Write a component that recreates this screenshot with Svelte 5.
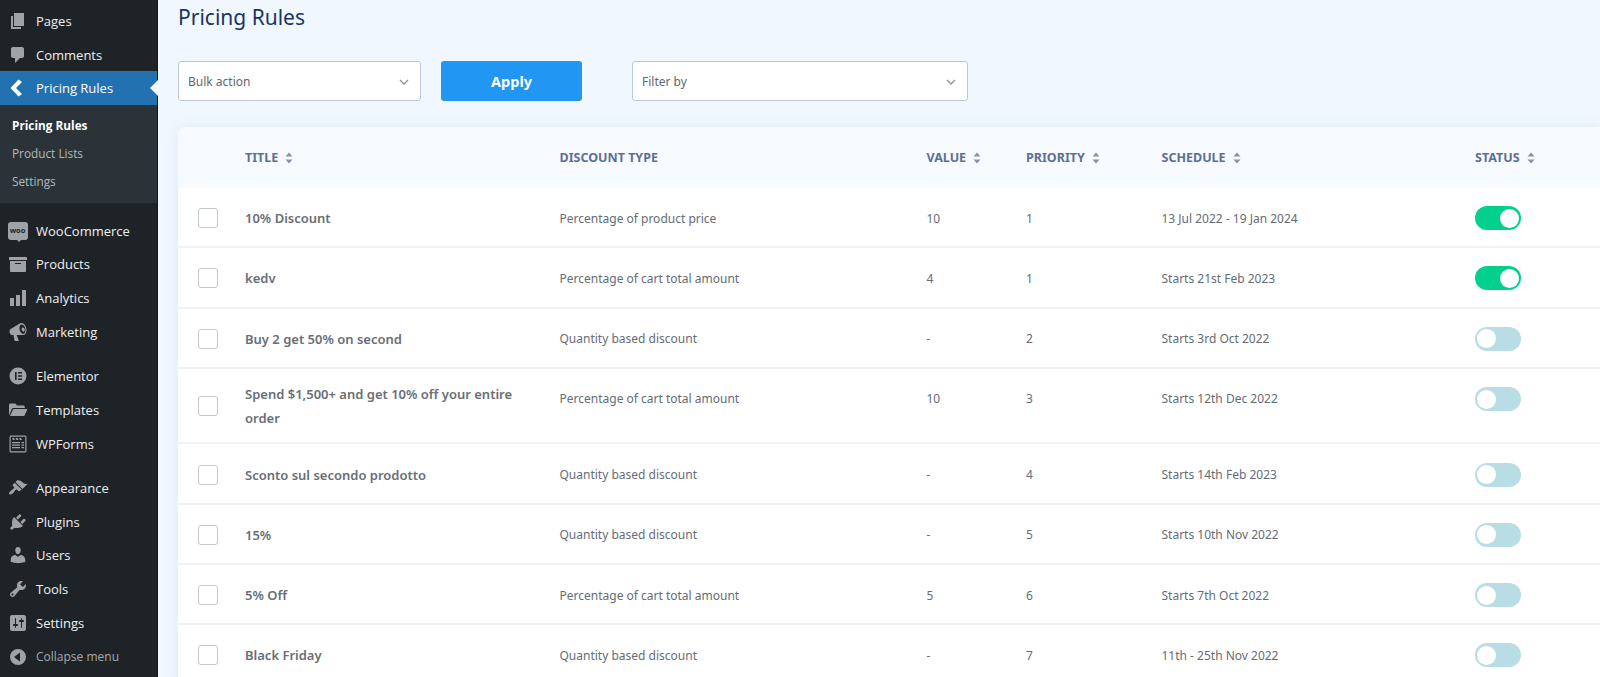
<script lang="ts">
  const icons: Record<string, string> = {
    pages: 'M6 15V2h10v13H6zm-1 1h8v2H3V5h2v11z',
    comments: 'M5 2h9c1.1 0 2 .9 2 2v7c0 1.1-.9 2-2 2h-2l-5 5v-5H5c-1.1 0-2-.9-2-2V4c0-1.1.9-2 2-2z',
    back: 'M10.500 1.500 14 4 8 10 14 16 10.500 18.500 2.500 10z',
    products: 'M19 4v2H1V4c0-.55.45-1 1-1h16c.55 0 1 .45 1 1zM2 7h16v10c0 .55-.45 1-1 1H3c-.55 0-1-.45-1-1V7zm11 3V9H7v1h6z',
    analytics: 'M18 18V2h-4v16h4zm-6 0V7H8v11h4zm-6 0v-8H2v8h4z',
    marketing: 'M18.15 5.94c.46 1.62.38 3.22-.02 4.48-.42 1.28-1.26 2.18-2.3 2.48-.3.1-.5.1-.8.1H8.6l2.2 5.5c0 .3-.2.5-.5.5H7c-.3 0-.5-.2-.5-.5l-1-5.5H4.25c-.5.06-1.08-.18-1.54-.62s-.88-1.08-1.06-1.88c-.24-.8-.2-1.56-.02-2.2.18-.62.58-1.08 1.06-1.3l9.02-5.42c.3-.2.5-.3.98-.46 1.04-.3 2.24.1 3.22 1 .98.88 1.8 2.24 2.26 3.86zm-2.6 5.98c.4-.1.76-.34 1.04-.7.58-.7.86-1.76.86-3.04 0-.64-.12-1.3-.3-2-.2-.68-.48-1.32-.84-1.86-.7-1.1-1.7-1.8-2.62-1.8-.12 0-.26.02-.38.06-.4.1-.76.36-1.04.72-.56.7-.84 1.7-.84 2.88 0 .6.1 1.3.3 1.96.2.68.48 1.32.84 1.9.7 1.1 1.68 1.78 2.62 1.78.12 0 .26 0 .36.1zM14.6 5.6c.9-.3 1.7.5 2 1.6.3 1.1 0 2.2-.8 2.4-.8.2-1.7-.6-2-1.7-.3-1.1 0-2.1.8-2.3z',
    templates: 'M1 15.500V5C1 4.200 1.600 3.500 2.400 3.500h4.400c.6 0 1 .3 1.300.8l.7 1.200h6.600c.8 0 1.400.6 1.400 1.400V8H5.400c-.7 0-1.300.4-1.600 1L1 15.500zM2 16l2.900-6.200c.2-.5.6-.8 1.100-.8h12.500c.5 0 .8.500.6 1l-2.300 5c-.2.6-.7 1-1.300 1H2z',
    appearance: 'M14.48 11.06L7.41 3.99l1.5-1.5c.5-.56 2.3-.47 3.51.32 1.21.8 1.43 1.28 2.91 2.1 1.18.64 2.45 1.26 4.45.85zm-.71.71L6.7 4.7 4.93 6.47c-.39.39-.39 1.02 0 1.41l1.06 1.06c.39.39.39 1.03 0 1.42-.6.6-1.43 1.11-2.21 1.69-.35.26-.7.53-1.01.84C1.43 13.23.75 15.38 1.3 16.2c.55.82 2.57.2 3.89-1.14.31-.31.58-.66.84-1.01.58-.78 1.09-1.61 1.69-2.21.39-.39 1.03-.39 1.42 0l1.06 1.06c.39.39 1.02.39 1.41 0z',
    plugins: 'M13.11 4.36L9.87 7.6 8 5.73l3.24-3.24c.35-.34 1.05-.2 1.56.32.52.51.66 1.21.31 1.55zm-8 1.77l.91-1.12 9.01 9.01-1.19.84c-.71.71-2.63 1.16-3.82 1.16H6.14L4.9 17.26c-.59.59-1.54.59-2.12 0-.59-.58-.59-1.53 0-2.12l1.24-1.24v-3.88c0-1.13.4-3.19 1.09-3.89zm7.26 3.97l3.24-3.24c.34-.35 1.04-.21 1.55.31.52.51.66 1.21.31 1.55l-3.24 3.25z',
    users: 'M10 9.25c-2.27 0-2.73-3.44-2.73-3.44C7 4.02 7.82 2 9.97 2c2.16 0 2.98 2.02 2.71 3.81 0 0-.41 3.44-2.68 3.44zm0 2.57L12.72 10c2.39 0 4.52 2.33 4.52 4.53v2.49s-3.65 1.13-7.24 1.13c-3.65 0-7.24-1.13-7.24-1.13v-2.49c0-2.25 1.94-4.48 4.47-4.48z',
    tools: 'M16.68 9.77c-1.34 1.34-3.3 1.67-4.95.99l-5.41 6.52c-.99.99-2.59.99-3.58 0s-.99-2.59 0-3.57l6.52-5.42c-.68-1.65-.35-3.61.99-4.95 1.28-1.28 3.12-1.62 4.72-1.06l-2.89 2.89 2.82 2.82 2.86-2.87c.53 1.58.18 3.39-1.08 4.65zM3.81 16.21c.4.39 1.04.39 1.43 0 .4-.4.4-1.04 0-1.43-.39-.4-1.03-.4-1.43 0-.39.39-.39 1.03 0 1.43z',
    settings: 'M18 16V4c0-1.1-.9-2-2-2H4c-1.1 0-2 .9-2 2v12c0 1.1.9 2 2 2h12c1.1 0 2-.9 2-2zM8 11h1c.55 0 1 .45 1 1s-.45 1-1 1H8v1.5c0 .28-.22.5-.5.5s-.5-.22-.5-.5V13H6c-.55 0-1-.45-1-1s.45-1 1-1h1V5.5c0-.28.22-.5.5-.5s.5.22.5.5V11zm5-2h-1c-.55 0-1-.45-1-1s.45-1 1-1h1V5.5c0-.28.22-.5.5-.5s.5.22.5.5V7h1c.55 0 1 .45 1 1s-.45 1-1 1h-1v5.5c0 .28-.22.5-.5.5s-.5-.22-.5-.5V9z',
    elementor: 'M10 1.500a8.500 8.500 0 1 0 0 17 8.500 8.500 0 0 0 0-17zM7 6h1.600v8H7V6zm3 0h4v1.600h-4V6zm0 3.200h4v1.600h-4V9.200zm0 3.200h4V14h-4v-1.600z',
    wpforms: 'M3 1.500h14c.8 0 1.500.7 1.500 1.500v14c0 .8-.7 1.500-1.500 1.500H3c-.8 0-1.500-.7-1.500-1.500V3c0-.8.7-1.500 1.500-1.500zm-.300 1.200v14.600h14.600V2.700H2.700zM4 4h2l1 2H5L4 4zm3.500 0h2l1 2h-2l-1-2zm3.500 0h2l1 2h-2l-1-2zM4 8h8v1.200H4V8zm9.500 0H16v1.200h-2.500V8zM4 10.500h8v1.200H4v-1.200zm9.500 0H16v1.200h-2.500v-1.200zM4 13h8v1.200H4V13zm9.500 0H16v1.200h-2.500V13z',
    collapse: 'M10 2a8 8 0 1 0 0 16 8 8 0 0 0 0-16zm2 3.600v8.800L6 10l6-4.400z',
  };

  const groups = [
    [
      { label: 'Pages', icon: 'pages' },
      { label: 'Comments', icon: 'comments' },
      { label: 'Pricing Rules', icon: 'back', active: true },
    ],
    [
      { label: 'WooCommerce', icon: 'woo' },
      { label: 'Products', icon: 'products' },
      { label: 'Analytics', icon: 'analytics' },
      { label: 'Marketing', icon: 'marketing' },
    ],
    [
      { label: 'Elementor', icon: 'elementor' },
      { label: 'Templates', icon: 'templates' },
      { label: 'WPForms', icon: 'wpforms' },
    ],
    [
      { label: 'Appearance', icon: 'appearance' },
      { label: 'Plugins', icon: 'plugins' },
      { label: 'Users', icon: 'users' },
      { label: 'Tools', icon: 'tools' },
      { label: 'Settings', icon: 'settings' },
      { label: 'Collapse menu', icon: 'collapse', muted: true },
    ],
  ];

  const columns = [
    { label: 'Title', sort: true },
    { label: 'Discount Type', sort: false },
    { label: 'Value', sort: true },
    { label: 'Priority', sort: true },
    { label: 'Schedule', sort: true },
    { label: 'Status', sort: true },
  ];

  const rules = [
    { title: '10% Discount', type: 'Percentage of product price', value: '10', priority: 1, schedule: '13 Jul 2022 - 19 Jan 2024', on: true },
    { title: 'kedv', type: 'Percentage of cart total amount', value: '4', priority: 1, schedule: 'Starts 21st Feb 2023', on: true },
    { title: 'Buy 2 get 50% on second', type: 'Quantity based discount', value: '-', priority: 2, schedule: 'Starts 3rd Oct 2022', on: false },
    { title: 'Spend $1,500+ and get 10% off your entire order', type: 'Percentage of cart total amount', value: '10', priority: 3, schedule: 'Starts 12th Dec 2022', on: false, tall: true },
    { title: 'Sconto sul secondo prodotto', type: 'Quantity based discount', value: '-', priority: 4, schedule: 'Starts 14th Feb 2023', on: false },
    { title: '15%', type: 'Quantity based discount', value: '-', priority: 5, schedule: 'Starts 10th Nov 2022', on: false },
    { title: '5% Off', type: 'Percentage of cart total amount', value: '5', priority: 6, schedule: 'Starts 7th Oct 2022', on: false },
    { title: 'Black Friday', type: 'Quantity based discount', value: '-', priority: 7, schedule: '11th - 25th Nov 2022', on: false },
  ];
</script>

<div class="page">
  <aside class="sidebar">
    {#each groups as group}
      <ul class="menu-group">
        {#each group as item}
          <li class="menu-item" class:active={item.active} class:muted={item.muted}>
            <span class="menu-icon">
              {#if item.icon === 'woo'}
                <span class="woo-badge">woo</span>
              {:else}
                <svg width="20" height="20" viewBox="0 0 20 20" fill="currentColor" fill-rule="evenodd">
                  <path d={icons[item.icon]} />
                </svg>
              {/if}
            </span>
            <span>{item.label}</span>
          </li>
          {#if item.active}
            <ul class="submenu">
              <li class="current">Pricing Rules</li>
              <li>Product Lists</li>
              <li>Settings</li>
            </ul>
          {/if}
        {/each}
      </ul>
    {/each}
  </aside>

  <main class="content">
    <h1>Pricing Rules</h1>

    <div class="toolbar">
      <div class="select bulk">
        <span>Bulk action</span>
        <svg width="10" height="6" viewBox="0 0 10 6" fill="none" stroke="currentColor" stroke-width="1.300"><path d="M1 1l4 4 4-4" /></svg>
      </div>
      <button class="apply">Apply</button>
      <div class="select filter">
        <span>Filter by</span>
        <svg width="10" height="6" viewBox="0 0 10 6" fill="none" stroke="currentColor" stroke-width="1.300"><path d="M1 1l4 4 4-4" /></svg>
      </div>
    </div>

    <section class="card">
      <div class="row head">
        <span></span>
        {#each columns as col}
          <span class="th">
            {col.label}
            {#if col.sort}
              <svg width="8" height="12" viewBox="0 0 8 12" fill="currentColor"><path d="M4 0.500 7.500 4.500H.5zM4 11.500.5 7.500h7z" /></svg>
            {/if}
          </span>
        {/each}
      </div>
      {#each rules as rule}
        <div class="row rule" class:tall={rule.tall}>
          <span class="check"></span>
          <span class="title">{rule.title}</span>
          <span>{rule.type}</span>
          <span>{rule.value}</span>
          <span>{rule.priority}</span>
          <span>{rule.schedule}</span>
          <span class="toggle" class:on={rule.on}><i></i></span>
        </div>
      {/each}
    </section>
  </main>
</div>

<style>
  :global(body) {
    margin: 0;
    background: #f0f7ff;
  }

  .page {
    display: flex;
    height: 677px;
    overflow: hidden;
    font-family: 'Noto Sans', 'Open Sans', sans-serif;
  }

  .sidebar {
    width: 158px;
    flex: none;
    box-sizing: border-box;
    padding-top: 4px;
    background: #1d2327;
    border-right: 1px solid #14181b;
    font-family: 'Open Sans', sans-serif;
    font-size: 13px;
    color: #f0f0f1;
  }

  ul {
    list-style: none;
    margin: 0;
    padding: 0;
  }

  .menu-group {
    margin-bottom: 10.800px;
  }

  .menu-item {
    display: flex;
    align-items: center;
    height: 33.700px;
  }

  .menu-icon {
    width: 36px;
    display: flex;
    justify-content: center;
    color: #9ea3a8;
    flex: none;
    box-sizing: border-box;
    padding-right: 1px;
  }

  .menu-item.active {
    position: relative;
    background: #2271b1;
    color: #fff;
  }

  .menu-item.active .menu-icon {
    color: #fff;
  }

  .menu-item.active::after {
    content: '';
    position: absolute;
    right: -1px;
    top: 50%;
    margin-top: -8px;
    border: 8px solid transparent;
    border-right-color: #f0f7ff;
    border-left-width: 0;
  }

  .menu-item.muted {
    color: #a7aaad;
    font-size: 12px;
  }

  .woo-badge {
    position: relative;
    width: 20px;
    height: 18px;
    border-radius: 3px;
    background: #9ea3a8;
    color: #1d2327;
    font: 700 7.500px/17px 'Open Sans', sans-serif;
    text-align: center;
  }

  .woo-badge::after {
    content: '';
    position: absolute;
    left: 9px;
    bottom: -2px;
    border: 2px solid transparent;
    border-top-color: #9ea3a8;
    border-bottom-width: 0;
  }

  .submenu {
    height: 98px;
    box-sizing: border-box;
    padding-top: 5.500px;
    background: #2c3338;
    font-size: 11.800px;
    color: #b4b9be;
  }

  .submenu li {
    height: 28px;
    line-height: 28px;
    padding-left: 12px;
  }

  .submenu .current {
    color: #fff;
    font-weight: 700;
  }

  .content {
    flex: 1;
    min-width: 0;
    padding-left: 20px;
  }

  h1 {
    margin: 0;
    height: 61px;
    font-size: 21px;
    font-weight: 400;
    line-height: 34px;
    color: #1d3461;
  }

  .toolbar {
    display: flex;
    gap: 20px;
    height: 39.500px;
  }

  .select {
    display: flex;
    align-items: center;
    justify-content: space-between;
    box-sizing: border-box;
    padding: 0 11px 0 9px;
    background: #fff;
    border: 1px solid #bcc8d8;
    border-radius: 3px;
    font-size: 12px;
    color: #5f6670;
  }

  .select span {
    padding-top: 1px;
  }

  .select svg {
    color: #8b929b;
    margin-top: 2px;
  }

  .bulk {
    width: 243px;
  }

  .filter {
    width: 336px;
    margin-left: 30px;
  }

  .apply {
    width: 141px;
    border: 0;
    border-radius: 3px;
    background: #2196f3;
    color: #fff;
    font: 700 14.500px 'Noto Sans', 'Open Sans', sans-serif;
  }

  .card {
    margin-top: 26.500px;
    background: #fff;
    border-radius: 8px 0 0 0;
    box-shadow: 0 0 14px rgba(90, 120, 160, 0.1);
    overflow: hidden;
  }

  .row {
    display: grid;
    grid-template-columns: 67px 314.500px 367px 99.500px 135.500px 313.500px 1fr;
    align-items: center;
    font-size: 12px;
    color: #666c74;
  }

  .head {
    height: 61px;
    background: #f7fbff;
  }

  .th {
    display: flex;
    align-items: center;
    gap: 7px;
    font-size: 12.500px;
    font-weight: 700;
    text-transform: uppercase;
    color: #5c7093;
  }

  .th svg {
    color: #8593aa;
  }

  .rule {
    height: 60.300px;
    box-sizing: border-box;
    padding-top: 2px;
    border-bottom: 2px solid #eef2f6;
  }

  .rule.tall {
    height: 75.500px;
    align-items: start;
    padding-top: 21.500px;
  }

  .rule.tall .title {
    margin-top: -8px;
  }

  .rule.tall .check {
    margin-top: 6px;
  }

  .rule.tall .toggle {
    margin-top: -3px;
  }

  .check {
    width: 20px;
    height: 20px;
    box-sizing: border-box;
    margin-left: 20px;
    border: 1px solid #c3c8cf;
    border-radius: 3px;
    background: #fff;
  }

  .title {
    max-width: 275px;
    font-size: 13px;
    font-weight: 600;
    line-height: 24px;
    color: #696e75;
  }

  .toggle {
    display: flex;
    align-items: center;
    width: 46px;
    height: 24px;
    box-sizing: border-box;
    padding: 0 2px;
    border-radius: 12px;
    background: #b9dde4;
  }

  .toggle i {
    display: block;
    width: 19px;
    height: 19px;
    border-radius: 50%;
    background: #fff;
  }

  .toggle.on {
    justify-content: flex-end;
    background: #04d08d;
  }
</style>
